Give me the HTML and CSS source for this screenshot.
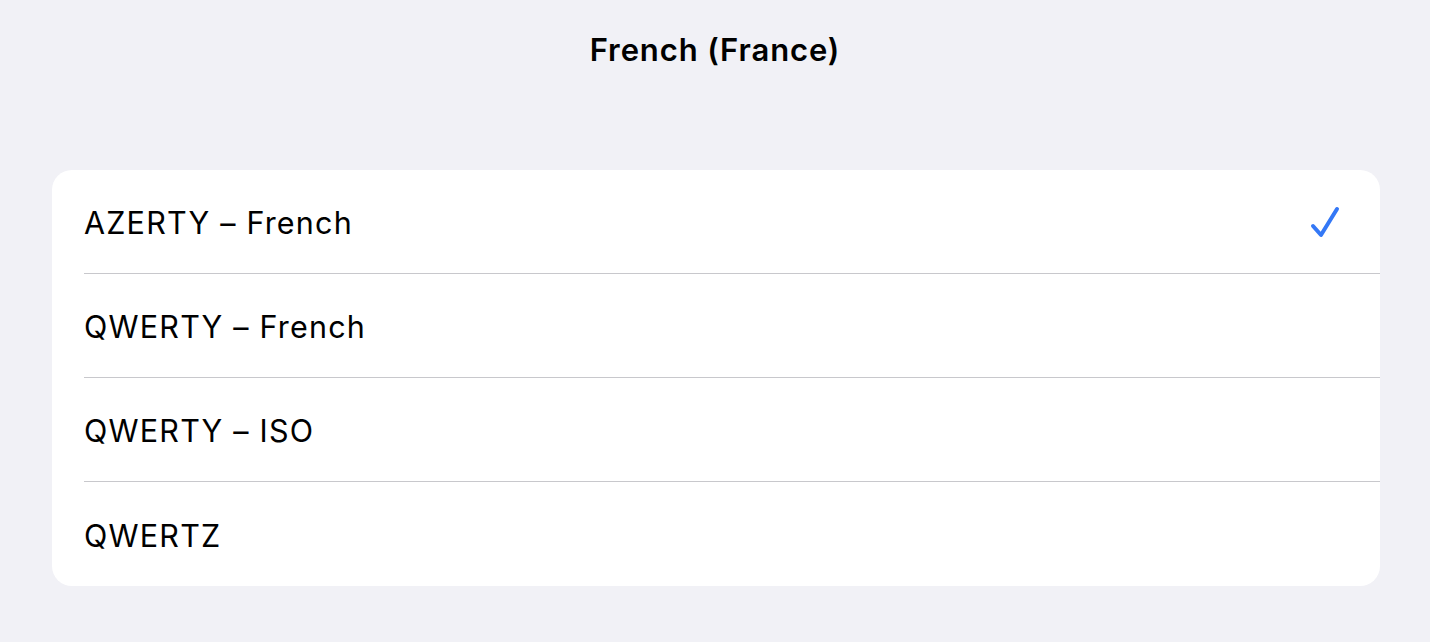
FILE: index.html
```html
<!DOCTYPE html>
<html lang="en">
<head>
  <meta charset="UTF-8">
  <title>French (France)</title>
  <link rel="stylesheet" href="styles.css">
</head>
<body>
  <h1 class="title">French (France)</h1>

  <ul class="list">
    <li class="row">
      <span>AZERTY – French</span>
      <svg class="check" width="32" height="32" viewBox="0 0 32 32">
        <path d="M3 20 L11 29 L27 3" />
      </svg>
    </li>
    <li class="row"><span>QWERTY – French</span></li>
    <li class="row"><span>QWERTY – ISO</span></li>
    <li class="row"><span>QWERTZ</span></li>
  </ul>
</body>
</html>
```

FILE: styles.css
```css
body {
  margin: 0;
  background-color: #f1f1f6;
  font-family: Inter, "Noto Sans", sans-serif;
  color: #000;
}

.title {
  margin: 0;
  padding-top: 31px;
  height: 170px;
  box-sizing: border-box;
  text-align: center;
  font-size: 31px;
  font-weight: 600;
  letter-spacing: 0.9px;
  line-height: 38px;
}

.list {
  list-style: none;
  margin: 0 50px 0 52px;
  padding: 0;
  background: white;
  border-radius: 20px;
  overflow: hidden;
}

.row {
  display: flex;
  align-items: center;
  justify-content: space-between;
  height: 103px;
  margin-left: 32px;
  padding-right: 38px;
  border-bottom: 1px solid #c8c8cc;
  font-size: 30.5px;
  letter-spacing: 1.2px;
}

.row:last-child {
  border-bottom: none;
  height: 104px;
}

.row span {
  padding-top: 2px;
}

.check {
  fill: none;
  stroke: #3478f6;
  stroke-width: 4;
  stroke-linecap: round;
  stroke-linejoin: round;
}
```
